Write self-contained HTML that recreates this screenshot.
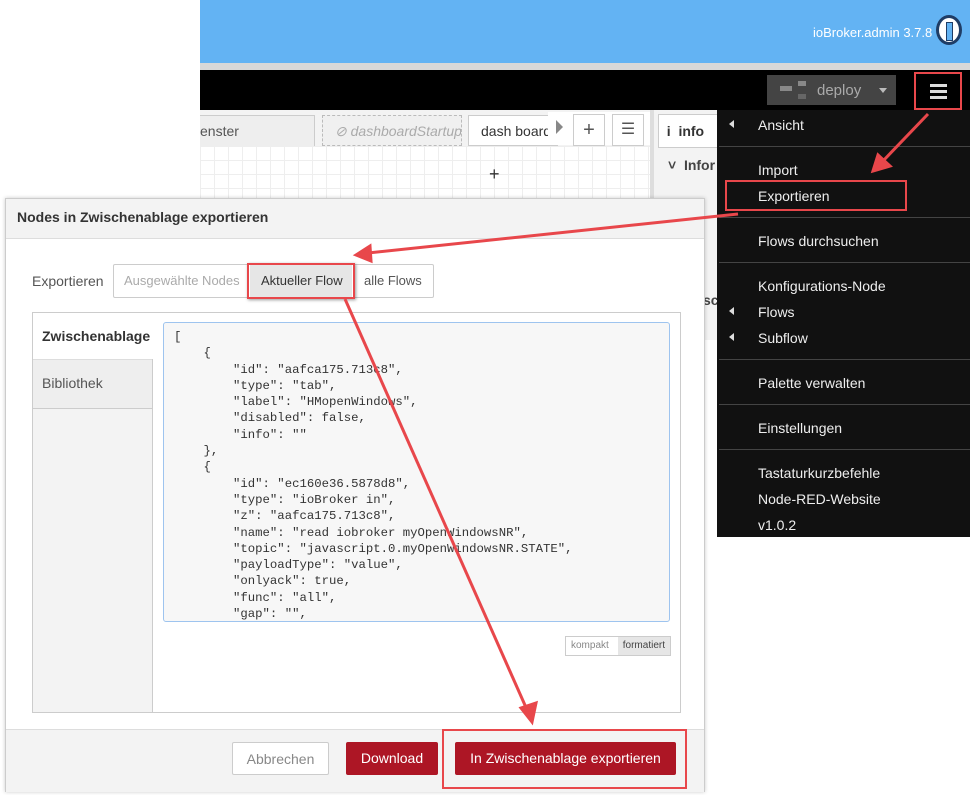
<!DOCTYPE html>
<html><head><meta charset="utf-8"><style>
body{margin:0;width:970px;height:795px;position:relative;overflow:hidden;background:#fff;font-family:"Liberation Sans",sans-serif;}
.abs{position:absolute;}
.grid{background-color:#fff;background-image:linear-gradient(#eee 1px,transparent 1px),linear-gradient(90deg,#eee 1px,transparent 1px);background-size:14px 14px;}
.menu div.it{position:absolute;left:41px;color:#eee;font-size:14px;}
.menu .sep{position:absolute;left:2px;right:0;height:1px;background:#444;}
.menu .tri{position:absolute;left:12px;width:0;height:0;border-top:4px solid transparent;border-bottom:4px solid transparent;border-right:5px solid #ddd;}
pre{margin:0;font-family:"Liberation Mono",monospace;font-size:12.3px;line-height:16.3px;color:#333;}
.btn{position:absolute;font-size:14px;text-align:center;border-radius:2px;}
</style></head><body>
<!-- top blue -->
<div class="abs" style="left:200px;top:0;width:770px;height:63px;background:#63b3f3;"></div>
<div class="abs" style="left:200px;top:63px;width:770px;height:7px;background:#d8d8d8;"></div>
<div class="abs" style="left:813px;top:25px;color:#fff;font-size:13px;">ioBroker.admin 3.7.8</div>
<div class="abs" style="left:936px;top:15px;width:26px;height:30px;border-radius:50%;background:#fff;border:3px solid #1f3d66;box-sizing:border-box;"></div>
<div class="abs" style="left:946px;top:22px;width:5px;height:17px;background:#63b3f3;border:1px solid #1f3d66;"></div>
<!-- black bar -->
<div class="abs" style="left:200px;top:70px;width:770px;height:40px;background:#000;"></div>
<div class="abs" style="left:767px;top:75px;width:129px;height:30px;background:#444;"></div>
<div class="abs" style="left:780px;top:86px;width:12px;height:5px;background:#888;"></div>
<div class="abs" style="left:798px;top:81px;width:8px;height:5px;background:#888;"></div>
<div class="abs" style="left:798px;top:94px;width:8px;height:5px;background:#666;"></div>
<div class="abs" style="left:817px;top:82px;color:#aaa;font-size:15px;">deploy</div>
<div class="abs" style="left:879px;top:88px;border-left:4px solid transparent;border-right:4px solid transparent;border-top:5px solid #bbb;"></div>
<div class="abs" style="left:914px;top:72px;width:48px;height:38px;border:2px solid #e8474b;box-sizing:border-box;"></div>
<div class="abs" style="left:930px;top:84px;width:17px;height:3px;background:#ddd;box-shadow:0 6px 0 #ddd,0 12px 0 #ddd;"></div>
<!-- tabs/canvas -->
<div class="abs" style="left:200px;top:110px;width:455px;height:36px;background:#f3f3f3;border-bottom:1px solid #ccc;"></div>
<div class="abs" style="left:200px;top:115px;width:114px;height:31px;background:#eee;border:1px solid #ccc;border-left:none;font-size:14px;color:#555;line-height:30px;">enster</div>
<div class="abs" style="left:322px;top:115px;width:140px;height:31px;border:1px dashed #bbb;background:#f0f0f0;font-size:14px;color:#aaa;font-style:italic;line-height:30px;padding-left:12px;box-sizing:border-box;overflow:hidden;white-space:nowrap;">⊘ dashboardStartup</div>
<div class="abs" style="left:468px;top:115px;width:90px;height:31px;background:#fff;border:1px solid #ccc;font-size:14px;color:#333;line-height:30px;padding-left:12px;box-sizing:border-box;overflow:hidden;white-space:nowrap;">dash board</div>
<div class="abs" style="left:548px;top:112px;width:104px;height:33px;background:#fff;"></div>
<div class="abs" style="left:556px;top:120px;border-top:7px solid transparent;border-bottom:7px solid transparent;border-left:7px solid #888;"></div>
<div class="abs" style="left:573px;top:114px;width:30px;height:30px;border:1px solid #ccc;font-size:20px;text-align:center;line-height:30px;color:#555;">+</div>
<div class="abs" style="left:612px;top:114px;width:30px;height:30px;border:1px solid #ccc;font-size:16px;text-align:center;line-height:30px;color:#555;">☰</div>
<div class="abs grid" style="left:200px;top:146px;width:450px;height:52px;"></div>
<div class="abs" style="left:489px;top:164px;font-size:18px;color:#333;">+</div>
<div class="abs" style="left:650px;top:110px;width:70px;height:230px;background:#f3f3f3;border-left:4px solid #ddd;"></div>
<div class="abs" style="left:658px;top:114px;width:60px;height:32px;background:#fff;border:1px solid #ccc;font-size:14px;font-weight:bold;line-height:32px;color:#333;">&nbsp;&nbsp;i&nbsp;&nbsp;info</div>
<div class="abs" style="left:668px;top:157px;font-size:14px;font-weight:bold;color:#444;">˅&nbsp; Infor</div>
<div class="abs" style="left:703px;top:292px;font-size:14px;font-weight:bold;color:#444;">sc</div>
<!-- menu -->
<div class="abs menu" style="left:717px;top:110px;width:253px;height:427px;background:#111;">
<div class="tri" style="top:10px"></div><div class="it" style="top:7px">Ansicht</div>
<div class="sep" style="top:36px"></div>
<div class="it" style="top:52px">Import</div>
<div class="it" style="top:78px">Exportieren</div>
<div class="sep" style="top:107px"></div>
<div class="it" style="top:123px">Flows durchsuchen</div>
<div class="sep" style="top:152px"></div>
<div class="it" style="top:168px">Konfigurations-Node</div>
<div class="tri" style="top:197px"></div><div class="it" style="top:194px">Flows</div>
<div class="tri" style="top:223px"></div><div class="it" style="top:220px">Subflow</div>
<div class="sep" style="top:249px"></div>
<div class="it" style="top:265px">Palette verwalten</div>
<div class="sep" style="top:294px"></div>
<div class="it" style="top:310px">Einstellungen</div>
<div class="sep" style="top:339px"></div>
<div class="it" style="top:355px">Tastaturkurzbefehle</div>
<div class="it" style="top:381px">Node-RED-Website</div>
<div class="it" style="top:407px">v1.0.2</div>
</div>
<div class="abs" style="left:725px;top:180px;width:182px;height:31px;border:2px solid #e8474b;box-sizing:border-box;"></div>
<!-- dialog -->
<div class="abs" style="left:5px;top:198px;width:700px;height:594px;background:#fff;border:1px solid #ccc;box-sizing:border-box;box-shadow:0 0 4px rgba(0,0,0,.2);"></div>
<div class="abs" style="left:6px;top:199px;width:698px;height:39px;background:#f3f3f3;border-bottom:1px solid #ddd;"></div>
<div class="abs" style="left:17px;top:209px;font-size:14px;font-weight:bold;color:#333;">Nodes in Zwischenablage exportieren</div>
<div class="abs" style="left:32px;top:273px;font-size:14px;color:#555;">Exportieren</div>
<div class="abs" style="left:113px;top:264px;width:319px;height:32px;border:1px solid #ccc;border-radius:2px;"></div>
<div class="abs" style="left:124px;top:273px;font-size:13px;color:#aaa;">Ausgewählte Nodes</div>
<div class="abs" style="left:250px;top:265px;width:102px;height:32px;background:#e6e6e6;"></div>
<div class="abs" style="left:261px;top:273px;font-size:13px;color:#333;">Aktueller Flow</div>
<div class="abs" style="left:364px;top:273px;font-size:13px;color:#555;">alle Flows</div>
<div class="abs" style="left:247px;top:263px;width:108px;height:36px;border:2px solid #e8474b;box-sizing:border-box;box-shadow:1px 1px 3px rgba(0,0,0,.4);"></div>
<div class="abs" style="left:32px;top:312px;width:649px;height:401px;border:1px solid #ccc;box-sizing:border-box;"></div>
<div class="abs" style="left:33px;top:359px;width:119px;height:353px;background:#f3f3f3;border-right:1px solid #ccc;"></div>
<div class="abs" style="left:33px;top:313px;width:120px;height:46px;background:#fff;"></div>
<div class="abs" style="left:33px;top:359px;width:119px;height:48px;background:#eee;border-bottom:1px solid #ccc;border-top:1px solid #ddd;"></div>
<div class="abs" style="left:42px;top:328px;font-size:14px;font-weight:bold;color:#333;">Zwischenablage</div>
<div class="abs" style="left:42px;top:375px;font-size:14px;color:#555;">Bibliothek</div>
<div class="abs" style="left:163px;top:322px;width:507px;height:300px;background:#f7f7f7;border:1px solid #9ec4ef;border-radius:3px;box-sizing:border-box;overflow:hidden;padding:6px 10px;">
<pre>[
    {
        "id": "aafca175.713c8",
        "type": "tab",
        "label": "HMopenWindows",
        "disabled": false,
        "info": ""
    },
    {
        "id": "ec160e36.5878d8",
        "type": "ioBroker in",
        "z": "aafca175.713c8",
        "name": "read iobroker myOpenWindowsNR",
        "topic": "javascript.0.myOpenWindowsNR.STATE",
        "payloadType": "value",
        "onlyack": true,
        "func": "all",
        "gap": "",
        "x": 300,</pre></div>
<div class="abs" style="left:565px;top:636px;width:104px;height:18px;border:1px solid #ccc;font-size:10px;line-height:18px;color:#888;"><span style="padding:0 5px;">kompakt</span><span style="background:#e6e6e6;color:#444;padding:3px 5px;float:right;line-height:12px;">formatiert</span></div>
<div class="abs" style="left:6px;top:729px;width:698px;height:62px;background:#f3f3f3;border-top:1px solid #ddd;"></div>
<div class="btn" style="left:232px;top:742px;width:97px;height:33px;background:#fff;border:1px solid #ccc;color:#888;line-height:33px;box-sizing:border-box;">Abbrechen</div>
<div class="btn" style="left:346px;top:742px;width:92px;height:33px;background:#ad1625;color:#fff;line-height:33px;">Download</div>
<div class="btn" style="left:455px;top:742px;width:221px;height:33px;background:#ad1625;color:#fff;line-height:33px;">In Zwischenablage exportieren</div>
<div class="abs" style="left:442px;top:729px;width:245px;height:60px;border:2px solid #e8474b;box-sizing:border-box;"></div>
<!-- arrows -->
<svg class="abs" style="left:0;top:0" width="970" height="795">
<g stroke="#e8474b" stroke-width="3" fill="#e8474b">
<line x1="928" y1="114" x2="882" y2="162"/>
<polygon points="873,171 878,155 890,166"/>
<line x1="738" y1="214" x2="368" y2="253"/>
<polygon points="356,255 370,246 371,261"/>
<line x1="345" y1="299" x2="528" y2="712"/>
<polygon points="532,722 521,708 536,703"/>
</g></svg>
</body></html>
